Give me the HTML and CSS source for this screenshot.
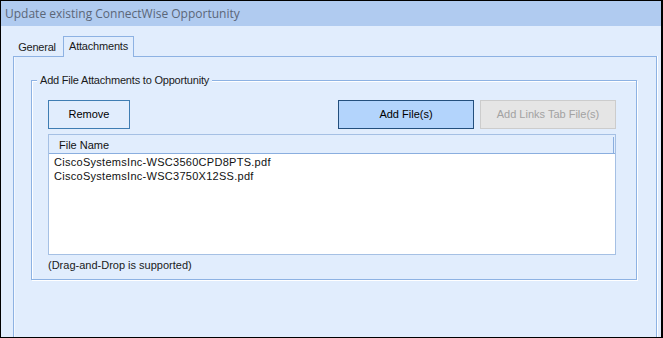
FILE: index.html
```html
<!DOCTYPE html>
<html>
<head>
<meta charset="utf-8">
<link rel="stylesheet" href="styles.css">
</head>
<body>
<div class="window">
  <div class="titlebar">Update existing ConnectWise Opportunity</div>
  <div class="client">
    <div class="tabs">
      <div class="tab">General</div>
      <div class="tab active">Attachments</div>
    </div>
    <div class="panel">
      <div class="group">
        <span class="group-label">Add File Attachments to Opportunity</span>
        <div class="toolbar">
          <button class="btn btn-remove">Remove</button>
          <span class="spacer"></span>
          <button class="btn btn-primary">Add File(s)</button>
          <button class="btn btn-disabled">Add Links Tab File(s)</button>
        </div>
        <div class="list">
          <div class="list-head"><span class="col">File Name</span><span class="divider"></span></div>
          <div class="rows">
            <div class="row">CiscoSystemsInc-WSC3560CPD8PTS.pdf</div>
            <div class="row">CiscoSystemsInc-WSC3750X12SS.pdf</div>
          </div>
        </div>
        <div class="note">(Drag-and-Drop is supported)</div>
      </div>
    </div>
  </div>
</div>
</body>
</html>
```
FILE: styles.css
```css
* { box-sizing: border-box; }
html, body { margin: 0; padding: 0; }
body {
  width: 663px;
  height: 338px;
  overflow: hidden;
  font-family: "Liberation Sans", Arial, sans-serif;
  font-size: 11px;
  color: #000;
}
.window {
  width: 663px;
  height: 338px;
  border-top: 1px solid #000;
  border-left: 1px solid #000;
  border-right: 2px solid #000;
  border-bottom: 1px solid #000;
  background: #e1edfd;
  display: flex;
  flex-direction: column;
}
.titlebar {
  height: 25px;
  line-height: 25px;
  background: #b0cbf0;
  color: #5b6678;
  font-family: "Open Sans", "Noto Sans", sans-serif;
  font-size: 12px;
  padding-left: 4px;
  white-space: nowrap;
}
.client {
  flex: 1;
  display: flex;
  flex-direction: column;
  padding: 10px 4px 0 12px;
}
.tabs {
  display: flex;
  align-items: flex-end;
  height: 21px;
  position: relative;
  z-index: 1;
  margin-bottom: -1px;
}
.tab {
  height: 19px;
  line-height: 18px;
  width: 48px;
  text-align: center;
  color: #1a1a1a;
  white-space: nowrap;
  letter-spacing: -0.2px;
}
.tab.active {
  height: 21px;
  line-height: 18px;
  width: 71px;
  margin-left: 2px;
  border: 1px solid #8db2e3;
  border-bottom: none;
  background: #e1edfd;
}
.panel {
  flex: 1;
  border: 1px solid #8db2e3;
  border-bottom: none;
  box-shadow: 1px 0 0 #ffffff, inset 1px 0 0 #f2f7fe;
  padding: 23px 19px 0 17px;
}
.group {
  position: relative;
  border: 1px solid #8db2e3;
  box-shadow: 1px 1px 0 #ffffff, inset 1px 1px 0 #ffffff;
  padding: 19px 20px 7px 16px;
}
.group-label {
  position: absolute;
  top: -8px;
  left: 5px;
  padding: 0 3px;
  line-height: 14px;
  background: #e1edfd;
  color: #1a1a1a;
  white-space: nowrap;
  letter-spacing: -0.2px;
}
.toolbar {
  display: flex;
  height: 29px;
  gap: 6px;
}
.spacer { flex: 1; }
.btn {
  margin: 0;
  padding: 0;
  height: 29px;
  font-family: inherit;
  font-size: 11px;
  line-height: 27px;
  text-align: center;
  border-radius: 0;
}
.btn-remove {
  width: 82px;
  border: 1px solid #3f7db3;
  background: #e1edfd;
  color: #000;
}
.btn-primary {
  width: 136px;
  border: 1px solid #234f7d;
  background: #b3d4fc;
  color: #000;
}
.btn-disabled {
  width: 136px;
  border: 1px solid #cccccc;
  background: #e5e5e5;
  color: #a2a2a2;
}
.list {
  margin-top: 5px;
  height: 121px;
  border: 1px solid #a5c0e4;
  background: #ffffff;
  display: flex;
  flex-direction: column;
}
.list-head {
  height: 19px;
  background: #e1edfd;
  border-bottom: 1px solid #8aaedf;
  display: flex;
  align-items: center;
  padding-left: 10px;
  padding-right: 1px;
}
.list-head .col {
  flex: 1;
  line-height: 14px;
  padding-top: 1px;
  color: #111;
}
.divider {
  width: 1px;
  height: 16px;
  margin-top: 1px;
  background: #8aaedf;
}
.rows {
  padding: 1px 0 0 5px;
}
.row {
  line-height: 14px;
  color: #111;
  white-space: nowrap;
  letter-spacing: 0.28px;
}
.note {
  margin-top: 3px;
  line-height: 14px;
  color: #1a1a1a;
}
```
